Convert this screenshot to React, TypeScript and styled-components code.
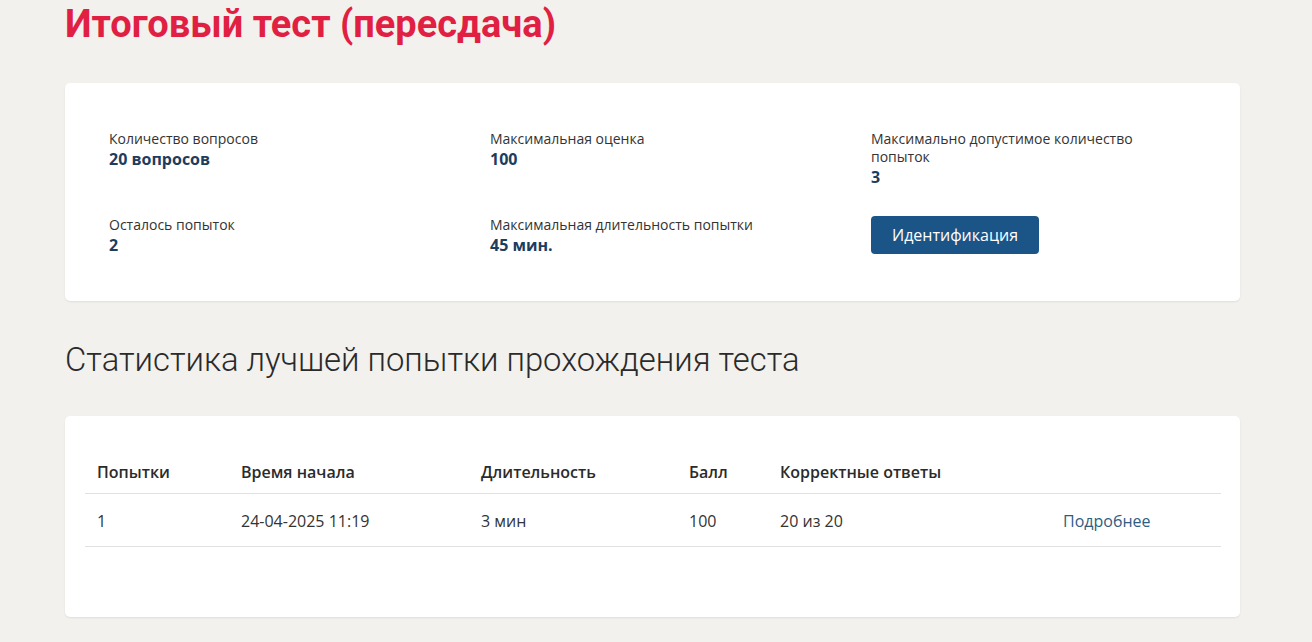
import React from "react";
import styled, { createGlobalStyle } from "styled-components";

const GlobalStyle = createGlobalStyle`
  html, body {
    margin: 0;
    padding: 0;
    background: #f2f1ee;
    font-family: "Open Sans", "Liberation Sans", sans-serif;
    color: #333;
  }
  * {
    box-sizing: border-box;
  }
`;

const Page = styled.div`
  width: 1175px;
  margin-left: 65px;
  padding-bottom: 40px;
`;

const Title = styled.h1`
  margin: 0;
  padding-top: 1px;
  height: 83px;
  font-family: "Roboto", "Liberation Sans", sans-serif;
  font-size: 38px;
  font-weight: 700;
  color: #e11f43;
  line-height: 46px;
`;

const Card = styled.section<{ $pad: string }>`
  background: #fff;
  border-radius: 5px;
  box-shadow: 0 1px 2px rgba(0, 0, 0, 0.08);
  padding: ${(p) => p.$pad};
`;

const InfoGrid = styled.div`
  display: grid;
  grid-template-columns: 381px 381px 1fr;
  row-gap: 28px;
`;

const InfoItem = styled.div`
  display: flex;
  flex-direction: column;
`;

const Label = styled.span`
  font-size: 14px;
  line-height: 18px;
  color: #333;
  max-width: 290px;
`;

const Value = styled.span`
  font-size: 16px;
  line-height: 22px;
  font-weight: 700;
  color: #1c3d5e;
`;

const Button = styled.button`
  align-self: flex-start;
  width: 168px;
  height: 38px;
  border: none;
  border-radius: 4px;
  background: #1b5588;
  color: #fff;
  font-family: inherit;
  font-size: 16px;
  cursor: pointer;
`;

const Subtitle = styled.h2`
  margin: 0;
  height: 115px;
  padding-top: 37px;
  font-family: "Roboto", "Liberation Sans", sans-serif;
  font-size: 32.8px;
  font-weight: 300;
  color: #2a2a2a;
  line-height: 44px;
`;

const Table = styled.table`
  width: 100%;
  border-collapse: collapse;
  font-size: 16px;
`;

const Th = styled.th<{ $w?: number }>`
  text-align: left;
  font-weight: 600;
  color: #2b2b2b;
  padding: 0 12px 10px;
  height: 53px;
  line-height: 22px;
  vertical-align: bottom;
  border-bottom: 1px solid #e2e2e2;
  width: ${(p) => (p.$w ? `${p.$w}px` : "auto")};
`;

const Td = styled.td`
  padding: 3px 12px 0;
  height: 53px;
  line-height: 22px;
  color: #333;
  border-bottom: 1px solid #e2e2e2;
`;

const MoreLink = styled.a`
  color: #2e5d83;
  text-decoration: none;
  cursor: pointer;
`;

const info = [
  { label: "Количество вопросов", value: "20 вопросов" },
  { label: "Максимальная оценка", value: "100" },
  { label: "Максимально допустимое количество попыток", value: "3" },
  { label: "Осталось попыток", value: "2" },
  { label: "Максимальная длительность попытки", value: "45 мин." },
];

const columns = [
  { title: "Попытки", w: 144 },
  { title: "Время начала", w: 240 },
  { title: "Длительность", w: 208 },
  { title: "Балл", w: 91 },
  { title: "Корректные ответы", w: 283 },
  { title: "", w: 170 },
];

export default function App() {
  return (
    <>
      <GlobalStyle />
      <Page>
        <Title>Итоговый тест (пересдача)</Title>
        <Card $pad="47px 44px 45px 44px">
          <InfoGrid>
            {info.map((item) => (
              <InfoItem key={item.label}>
                <Label>{item.label}</Label>
                <Value>{item.value}</Value>
              </InfoItem>
            ))}
            <InfoItem>
              <Button>Идентификация</Button>
            </InfoItem>
          </InfoGrid>
        </Card>
        <Subtitle>Статистика лучшей попытки прохождения теста</Subtitle>
        <Card $pad="24px 19px 70px 20px">
          <Table>
            <thead>
              <tr>
                {columns.map((c, i) => (
                  <Th key={i} $w={c.w}>
                    {c.title}
                  </Th>
                ))}
              </tr>
            </thead>
            <tbody>
              <tr>
                <Td>1</Td>
                <Td>24-04-2025 11:19</Td>
                <Td>3 мин</Td>
                <Td>100</Td>
                <Td>20 из 20</Td>
                <Td>
                  <MoreLink>Подробнее</MoreLink>
                </Td>
              </tr>
            </tbody>
          </Table>
        </Card>
      </Page>
    </>
  );
}
